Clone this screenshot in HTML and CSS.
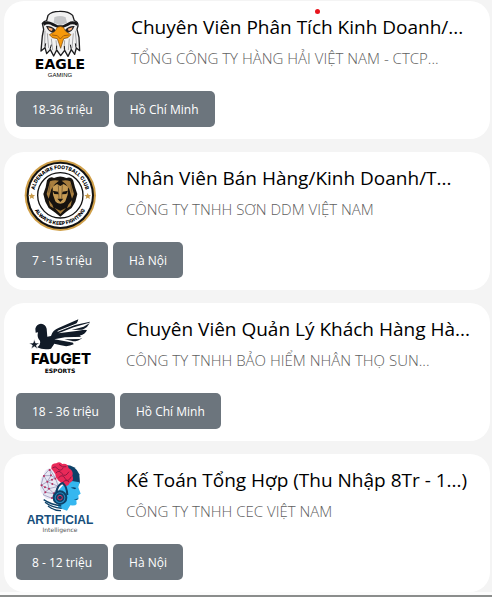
FILE: index.html
```html
<!DOCTYPE html>
<html lang="vi">
<head>
<meta charset="utf-8">
<meta name="viewport" content="width=device-width, initial-scale=1">
<title>Việc làm</title>
<link rel="stylesheet" href="styles.css">
</head>
<body>
<main class="jobs">
  <article class="job job--new">
    <span class="job__dot"></span>
    <div class="job__head">
      <svg class="job__logo" viewBox="0 0 88 76" aria-hidden="true">
        <g transform="translate(4 -8) scale(.3333)">
          <path d="M84 46Q94 34 118 34Q146 33 158 46L163 62Q175 66 174 78L171 88L177 112L179 152L169 144L164 163L154 149L144 169L134 151L122 167L110 150L101 168L91 149L80 161L75 143L63 153L67 108L71 88L67 70Q72 63 80 62Z" fill="#f1f1f1" stroke="#1c1c1e" stroke-width="4" stroke-linejoin="round"/>
          <path d="M103 52Q120 44 137 52L141 68L121 76L101 68Z" fill="#c4c5c7"/>
          <path d="M68 68Q82 59 98 68L113 76H129L144 68Q160 59 174 70L170 77Q157 69 145 77L130 83H112L97 77Q84 69 72 77Z" fill="#171719"/>
          <path d="M78 78Q95 76 107 90L103 99Q86 99 78 78ZM164 78Q147 76 135 90L139 99Q156 99 164 78Z" fill="#242326"/>
          <path d="M84 82L98 86L96 93L88 90ZM158 82L144 86L146 93L154 90Z" fill="#ffb27b"/>
          <path d="M112 82Q121 77 130 82L137 94L153 104L144 113L131 116L122 145L112 116L97 113L88 104L105 94Z" fill="#f7990b" stroke="#6f4410" stroke-width="2"/>
          <path d="M96 105L112 107L121 117L131 107L147 105" fill="none" stroke="#a9600b" stroke-width="3"/>
          <path d="M75 92L74 138M82 100L86 144M94 116L98 150M166 92L170 138M160 100L156 144M148 116L145 150M108 121L111 148M134 121L132 148" fill="none" stroke="#a5a6a9" stroke-width="3"/>
          <path d="M90 148L94 134M109 149L110 137M134 150L133 138M154 149L151 134M75 142L77 130M168 143L166 130" stroke="#1c1c1e" stroke-width="3"/>
        </g>
        <text class="mark mark--eagle" x="44" y="61">EAGLE</text>
        <text class="mark mark--gaming" x="44" y="69">GAMING</text>
      </svg>
      <div class="job__info">
        <h2 class="job__title"><a href="#">Chuyên Viên Phân Tích Kinh Doanh/...</a></h2>
        <p class="job__company">TỔNG CÔNG TY HÀNG HẢI VIỆT NAM - CTCP...</p>
      </div>
    </div>
    <div class="job__tags">
      <button class="tag" type="button">18-36 triệu</button>
      <button class="tag" type="button">Hồ Chí Minh</button>
    </div>
  </article>

  <article class="job">
    <div class="job__head">
      <svg class="job__logo" viewBox="0 0 88 76" aria-hidden="true">
        <defs>
          <path id="arc-top" d="M20 46A26 26 0 1 1 68 46"/>
          <path id="arc-bottom" d="M15 37A29 29 0 0 0 73 37"/>
        </defs>
        <g transform="translate(-1 -9) scale(.3333)">
          <circle cx="136" cy="136" r="107" fill="#d0a04a"/>
          <circle cx="136" cy="136" r="101" fill="#111"/>
          <circle cx="136" cy="136" r="95" fill="#fff"/>
          <circle cx="136" cy="136" r="68" fill="#fff" stroke="#111" stroke-width="4"/>
          <path d="M50 129l3 6h7l-5 5 2 7-7-4-6 4 2-7-6-5h7zM218 129l3 6h7l-5 5 2 7-7-4-6 4 2-7-6-5h7z" fill="#c79a49"/>
          <path d="M96 91Q104 78 117 84Q136 75 154 84Q168 78 175 92L180 112L187 132L181 155L170 174L154 185L136 200L117 185L101 174L91 155L85 132L92 112Z" fill="#17130f"/>
          <path d="M105 94Q118 88 132 92L120 102L109 118L101 146L95 132ZM166 94Q154 88 140 92L152 102L163 118L171 146L177 132ZM101 150L112 164L116 175L105 168ZM171 150L160 164L156 175L167 168ZM119 174L136 182L153 174L136 192Z" fill="#a87e3e"/>
          <path d="M113 110L126 102L136 108L146 102L159 110L158 134L151 154L136 169L121 154L114 134Z" fill="#c69b54"/>
          <path d="M113 122L129 125L132 133L118 132ZM159 122L143 125L140 133L154 132ZM127 146H145L136 156ZM123 158L136 161L149 158L143 169H129Z" fill="#17130f"/>
          <path d="M130 106L132 146M142 106L140 146M105 103L101 128M167 103L171 128" stroke="#5f4828" stroke-width="2"/>
        </g>
        <text class="mark mark--ring"><textPath href="#arc-top" startOffset="50%">ALDENAIRE FOOTBALL CLUB</textPath></text>
        <text class="mark mark--ring"><textPath href="#arc-bottom" startOffset="50%">ALWAYS KEEP FIGHTING</textPath></text>
      </svg>
      <div class="job__info">
        <h2 class="job__title"><a href="#">Nhân Viên Bán Hàng/Kinh Doanh/T...</a></h2>
        <p class="job__company">CÔNG TY TNHH SƠN DDM VIỆT NAM</p>
      </div>
    </div>
    <div class="job__tags">
      <button class="tag" type="button">7 - 15 triệu</button>
      <button class="tag" type="button">Hà Nội</button>
    </div>
  </article>

  <article class="job">
    <div class="job__head">
      <svg class="job__logo" viewBox="0 0 88 76" aria-hidden="true">
        <g transform="translate(-1 -4) scale(.3333)">
          <path d="M61 68Q64 54 78 53Q92 54 95 68L97 92L108 90Q112 72 132 65L190 40Q188 53 176 58L225 47Q220 64 202 71L216 72Q212 84 194 89L202 95Q192 106 172 106L176 115Q158 124 138 118L118 113L108 128Q86 133 66 124Q78 116 75 104Q65 95 69 79L62 80Z" fill="#111b28"/>
          <path d="M228 49L176 64L130 82L184 75L222 69L200 71L170 72L206 62ZM208 92L150 94L118 100L180 111L172 105L148 100L194 99Z" fill="#fff"/>
          <path d="M184 54L128 76" stroke="#fff" stroke-width="3"/>
          <path d="M58 100l4 11h12l-10 7 4 11-10-7-10 7 4-11-10-7h12z" fill="#111b28" stroke="#fff" stroke-width="2"/>
        </g>
        <text class="mark mark--fauget" x="45" y="54">FAUGET</text>
        <text class="mark mark--esports" x="44" y="63">ESPORTS</text>
      </svg>
      <div class="job__info">
        <h2 class="job__title"><a href="#">Chuyên Viên Quản Lý Khách Hàng Hà...</a></h2>
        <p class="job__company">CÔNG TY TNHH BẢO HIỂM NHÂN THỌ SUN...</p>
      </div>
    </div>
    <div class="job__tags">
      <button class="tag" type="button">18 - 36 triệu</button>
      <button class="tag" type="button">Hồ Chí Minh</button>
    </div>
  </article>

  <article class="job">
    <div class="job__head">
      <svg class="job__logo" viewBox="0 0 88 76" aria-hidden="true">
        <g transform="translate(-1 -6) scale(.3333)">
          <path d="M145 30Q181 27 193 58L195 85L146 90Z" fill="#0d4168"/>
          <path d="M148 86L166 77L194 82L190 97L197 116L190 121L191 132L184 136L185 147Q182 153 166 151L156 167L130 158L126 112Z" fill="#35b7f0"/>
          <path d="M167 98Q175 95 184 99L180 103ZM176 135L189 130L187 134Z" fill="#0d4168"/>
          <path d="M109 39Q108 25 124 25Q134 18 142 27Q158 24 161 40Q177 48 172 62Q179 76 164 84Q158 99 145 91L132 78Q119 72 121 57Q108 53 109 39Z" fill="#e92958"/>
          <path d="M112 39Q121 31 128 41T145 39M132 28Q143 40 154 35M123 54Q132 43 141 56T162 50M130 69Q142 55 150 70T169 65M143 83Q153 71 162 81" fill="none" stroke="#8e1742" stroke-width="3"/>
          <path d="M105 39Q120 49 122 66Q136 79 132 101Q129 125 113 132Q91 137 85 119Q71 108 77 90Q73 70 86 60Q87 43 105 39Z" fill="#e9e8f4"/>
          <path d="M104 42L86 62L108 62L121 69L97 80L78 91L102 101L130 94L117 116L91 112L84 119L111 130L117 116L130 94L121 69L104 42L108 62L97 80L86 62L78 91L91 112L102 101L97 80L130 94M102 101L117 116" fill="none" stroke="#8888b1" stroke-width="2"/>
          <path d="M104 45h0M87 63h0M108 61h0M121 71h0M97 80h0M80 91h0M102 101h0M129 95h0M117 115h0M91 112h0M111 129h0M112 87h0M90 97h0M111 74h0" fill="none" stroke="#b72e5d" stroke-width="6" stroke-linecap="round"/>
          <path d="M124 112Q128 88 143 84Q156 94 157 120" fill="none" stroke="#0d4168" stroke-width="6"/>
          <circle cx="135" cy="128" r="22" fill="#0d4168"/>
          <circle cx="135" cy="128" r="16" fill="#2b8fc4"/>
          <circle cx="135" cy="128" r="13" fill="#0d4168"/>
          <circle cx="135" cy="128" r="7" fill="none" stroke="#dc3160" stroke-width="3"/>
          <path d="M86 134Q108 149 139 153M90 142Q110 158 140 160M99 153Q119 168 138 167" fill="none" stroke="#0d4168" stroke-width="4"/>
        </g>
        <text class="mark mark--artificial" x="44" y="63">ARTIFICIAL</text>
        <text class="mark mark--intelligence" x="44" y="71">Intelligence</text>
      </svg>
      <div class="job__info">
        <h2 class="job__title"><a href="#">Kế Toán Tổng Hợp (Thu Nhập 8Tr - 1...)</a></h2>
        <p class="job__company">CÔNG TY TNHH CEC VIỆT NAM</p>
      </div>
    </div>
    <div class="job__tags">
      <button class="tag" type="button">8 - 12 triệu</button>
      <button class="tag" type="button">Hà Nội</button>
    </div>
  </article>
</main>
<hr class="rule">
</body>
</html>
```
FILE: styles.css
```css
* {
  box-sizing: border-box;
}

body {
  margin: 0;
  background: #f4f4f4;
  font-family: "Open Sans", "Noto Sans", sans-serif;
  color: #000;
}

.jobs {
  display: grid;
  gap: 13px;
  padding: 1px 2px 0 4px;
}

.job {
  position: relative;
  display: grid;
  gap: 7px;
  padding: 7px 12px 12px;
  border-radius: 20px;
  background: #fff;
}

.job__dot {
  position: absolute;
  top: 8px;
  left: 311px;
  width: 5px;
  height: 5px;
  border-radius: 50%;
  background: #e8141c;
}

.job__head {
  display: flex;
  gap: 22px;
}

.job--new .job__head {
  gap: 27px;
}

.job__logo {
  flex: none;
  width: 88px;
  height: 76px;
}

.job__info {
  flex: 1;
  min-width: 0;
  padding-top: 3px;
  white-space: nowrap;
}

.job__title {
  margin: 0;
  font-size: 19px;
  font-weight: 400;
  line-height: 32px;
}

.job__title a {
  color: inherit;
  text-decoration: none;
}

.job__company {
  margin: 0;
  color: #606060;
  font-size: 15px;
  font-weight: 300;
  line-height: 30px;
}

.job__tags {
  display: flex;
  gap: 5px;
}

.tag {
  height: 36px;
  padding: 0 16px;
  border: 0;
  border-radius: 5px;
  background: #6c757d;
  color: #fff;
  font: 400 12px "Open Sans", "Noto Sans", sans-serif;
}

.rule {
  height: 5px;
  margin: 0;
  border: 0;
  border-bottom: 2px solid #8b8d8c;
  background: #fcfcfc;
}

.mark {
  font-family: "DejaVu Sans", sans-serif;
  text-anchor: middle;
}

.mark--eagle {
  font-size: 14px;
  font-weight: 700;
}

.mark--gaming {
  font-family: "Liberation Sans", sans-serif;
  font-size: 6px;
}

.mark--ring {
  font-family: Inter, sans-serif;
  font-size: 5px;
  font-weight: 800;
}

.mark--fauget {
  font-family: Inter, sans-serif;
  font-size: 15px;
  font-weight: 800;
}

.mark--esports {
  font-size: 6px;
  font-weight: 700;
}

.mark--artificial {
  font-family: "Liberation Sans", sans-serif;
  font-size: 12px;
  font-weight: 700;
  fill: #174f7c;
}

.mark--intelligence {
  font-size: 6px;
  fill: #555;
}
```
